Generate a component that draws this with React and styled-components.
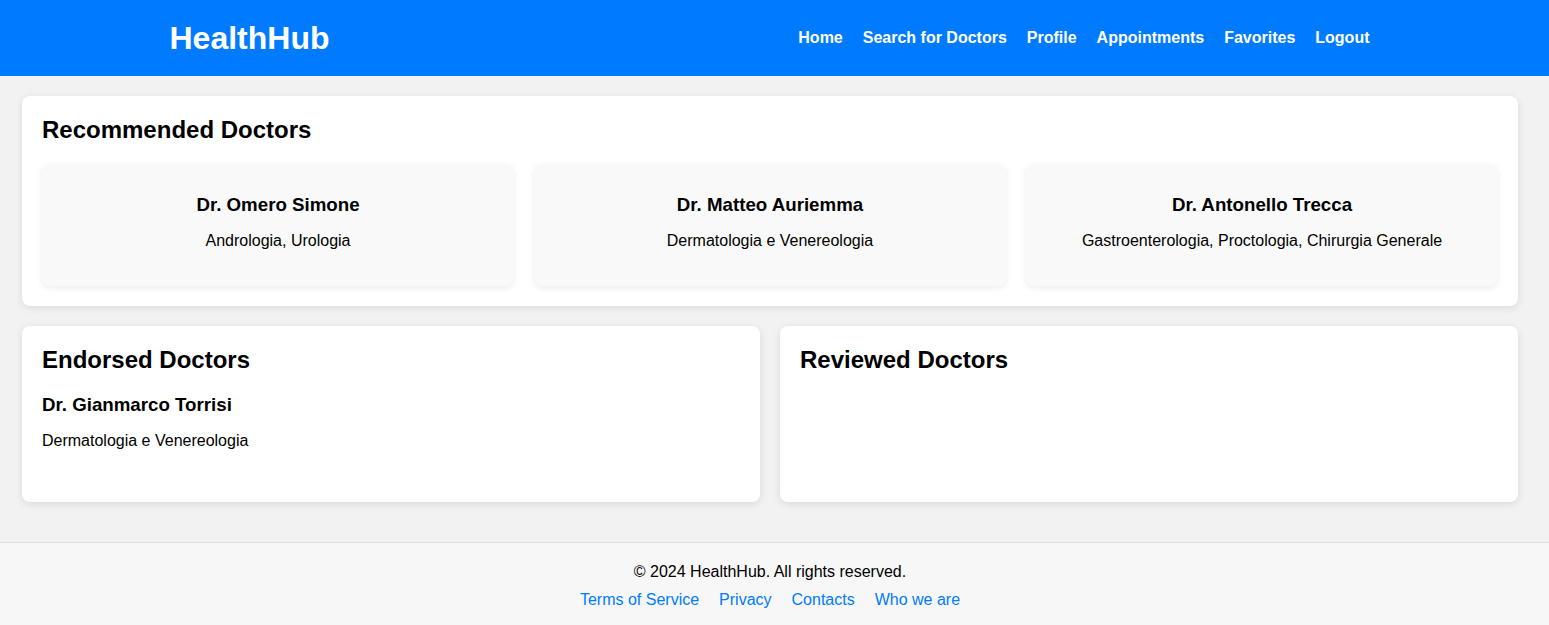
import styled, { createGlobalStyle } from "styled-components";

const GlobalStyle = createGlobalStyle`
  body {
    margin: 0;
    font-family: "Liberation Sans", Arial, sans-serif;
    background: #f2f2f2;
    color: #000;
  }
`;

const HeaderBar = styled.header`
  background: #007bff;
  height: 76px;
`;

const HeaderInner = styled.div`
  max-width: 1210px;
  height: 100%;
  margin: 0 auto;
  display: flex;
  align-items: center;
  justify-content: space-between;
`;

const Logo = styled.h1`
  margin: 0;
  color: #fff;
  font-size: 32px;
  font-weight: bold;
`;

const Nav = styled.nav`
  display: flex;
`;

const NavLink = styled.a`
  color: #fff;
  font-weight: bold;
  font-size: 16px;
  text-decoration: none;
  margin: 0 10px;
`;

const Main = styled.main`
  padding: 20px 31px 40px 22px;
  display: flex;
  flex-direction: column;
  gap: 20px;
`;

const Row = styled.div`
  display: grid;
  grid-template-columns: 1fr 1fr;
  gap: 20px;
`;

const Section = styled.section`
  background: #fff;
  border-radius: 8px;
  padding: 20px;
  min-height: ${(p) => p.$minHeight || "auto"};
  box-sizing: border-box;
  box-shadow: 0 2px 8px rgba(0, 0, 0, 0.1);
`;

const SectionTitle = styled.h2`
  margin: 0 0 20px;
  font-size: 24px;
  font-weight: bold;
  line-height: 28px;
`;

const CardGrid = styled.div`
  display: grid;
  grid-template-columns: repeat(3, 1fr);
  gap: 20px;
`;

const DoctorCard = styled.div`
  background: #f9f9f9;
  border-radius: 8px;
  padding: 21px 20px 20px;
  text-align: center;
  box-shadow: 0 2px 6px rgba(0, 0, 0, 0.08);
`;

const DoctorName = styled.h3`
  margin: ${(p) => (p.$inList ? "0 0 16px" : "9px 0 16px")};
  font-size: 18.72px;
  font-weight: bold;
`;

const Specialty = styled.p`
  margin: 0 0 16px;
  font-size: 16px;
`;

const FooterBar = styled.footer`
  background: #f7f7f7;
  border-top: 1px solid #ddd;
  padding: 20px 9px 17px 0;
  text-align: center;
  font-size: 16px;
`;

const Copyright = styled.p`
  margin: 0 0 10px;
`;

const FooterLinks = styled.div`
  display: flex;
  justify-content: center;
`;

const FooterLink = styled.a`
  color: #007bff;
  text-decoration: none;
  margin: 0 10px;
`;

const navItems = ["Home", "Search for Doctors", "Profile", "Appointments", "Favorites", "Logout"];

const recommended = [
  { name: "Dr. Omero Simone", spec: "Andrologia, Urologia" },
  { name: "Dr. Matteo Auriemma", spec: "Dermatologia e Venereologia" },
  { name: "Dr. Antonello Trecca", spec: "Gastroenterologia, Proctologia, Chirurgia Generale" },
];

const App = () => {
  return (
    <>
      <GlobalStyle />
      <HeaderBar>
        <HeaderInner>
          <Logo>HealthHub</Logo>
          <Nav>
            {navItems.map((item) => (
              <NavLink key={item} href="#">
                {item}
              </NavLink>
            ))}
          </Nav>
        </HeaderInner>
      </HeaderBar>
      <Main>
        <Section>
          <SectionTitle>Recommended Doctors</SectionTitle>
          <CardGrid>
            {recommended.map((d) => (
              <DoctorCard key={d.name}>
                <DoctorName>{d.name}</DoctorName>
                <Specialty>{d.spec}</Specialty>
              </DoctorCard>
            ))}
          </CardGrid>
        </Section>
        <Row>
          <Section $minHeight="176px">
            <SectionTitle>Endorsed Doctors</SectionTitle>
            <DoctorName $inList>Dr. Gianmarco Torrisi</DoctorName>
            <Specialty>Dermatologia e Venereologia</Specialty>
          </Section>
          <Section $minHeight="176px">
            <SectionTitle>Reviewed Doctors</SectionTitle>
          </Section>
        </Row>
      </Main>
      <FooterBar>
        <Copyright>© 2024 HealthHub. All rights reserved.</Copyright>
        <FooterLinks>
          <FooterLink href="#">Terms of Service</FooterLink>
          <FooterLink href="#">Privacy</FooterLink>
          <FooterLink href="#">Contacts</FooterLink>
          <FooterLink href="#">Who we are</FooterLink>
        </FooterLinks>
      </FooterBar>
    </>
  );
};

export default App;
